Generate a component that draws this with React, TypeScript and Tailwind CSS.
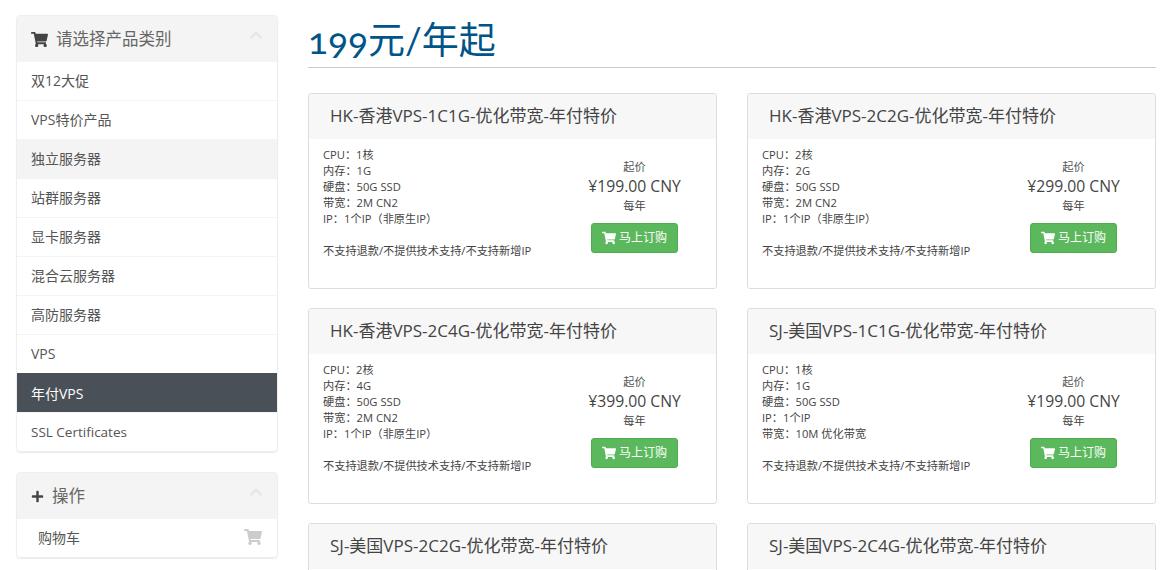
import React from 'react';
import { FaShoppingCart, FaPlus, FaChevronUp } from 'react-icons/fa';

const categories = ['双12大促', 'VPS特价产品', '独立服务器', '站群服务器', '显卡服务器', '混合云服务器', '高防服务器', 'VPS', '年付VPS', 'SSL Certificates'];

const products = [
  { name: 'HK-香港VPS-1C1G-优化带宽-年付特价', specs: ['CPU：1核', '内存：1G', '硬盘：50G SSD', '带宽：2M CN2', 'IP：1个IP（非原生IP）'], price: '¥199.00 CNY' },
  { name: 'HK-香港VPS-2C2G-优化带宽-年付特价', specs: ['CPU：2核', '内存：2G', '硬盘：50G SSD', '带宽：2M CN2', 'IP：1个IP（非原生IP）'], price: '¥299.00 CNY' },
  { name: 'HK-香港VPS-2C4G-优化带宽-年付特价', specs: ['CPU：2核', '内存：4G', '硬盘：50G SSD', '带宽：2M CN2', 'IP：1个IP（非原生IP）'], price: '¥399.00 CNY' },
  { name: 'SJ-美国VPS-1C1G-优化带宽-年付特价', specs: ['CPU：1核', '内存：1G', '硬盘：50G SSD', 'IP：1个IP', '带宽：10M 优化带宽'], price: '¥199.00 CNY' },
  { name: 'SJ-美国VPS-2C2G-优化带宽-年付特价', specs: ['CPU：1核', '内存：2G', '硬盘：50G SSD', 'IP：1个IP', '带宽：10M 优化带宽'], price: '¥299.00 CNY' },
  { name: 'SJ-美国VPS-2C4G-优化带宽-年付特价', specs: ['CPU：2核', '内存：4G', '硬盘：50G SSD', 'IP：1个IP', '带宽：10M 优化带宽'], price: '¥399.00 CNY' },
];

const PanelHeader = ({ icon, title }: { icon: React.ReactNode; title: string }) => (
  <div className="h-[46px] pt-[1px] bg-[#f4f4f4] flex items-center pl-[14px] pr-[14px] text-[#666]">
    <span className="text-[#444] text-[17px]">{icon}</span>
    <span className="ml-[8px] text-[16.5px]">{title}</span>
    <FaChevronUp className="ml-auto -mt-[9px] text-[#e6e6e6] text-[14px]" />
  </div>
);

const ProductCard = ({ name, specs, price }: { name: string; specs: string[]; price: string }) => (
  <div className="h-[196px] shrink-0 border border-[#dddddd] rounded-[3px] overflow-hidden bg-white">
    <div className="h-[45px] pb-[2px] bg-[#f7f7f7] flex items-center pl-[21px] text-[17px] text-[#444]">{name}</div>
    <div className="flex pl-[14px] pt-[8px] text-[#444]">
      <div className="w-[258px] text-[11.2px] leading-[16px]">
        {specs.map((s) => (
          <div key={s}>{s}</div>
        ))}
        <div className="mt-[16px]">不支持退款/不提供技术支持/不支持新增IP</div>
      </div>
      <div className="w-[103px] ml-[2px] flex flex-col items-center pt-[12px]">
        <div className="text-[11.2px] leading-[16px] text-[#555]">起价</div>
        <div className="text-[15.7px] leading-[22px] whitespace-nowrap">{price}</div>
        <div className="text-[11.2px] leading-[16px] mt-[1px]">每年</div>
        <button className="mt-[9px] w-[87px] h-[30px] shrink-0 bg-[#5cb85c] border border-[#4cae4c] rounded-[3px] text-white text-[12px] flex items-center justify-center gap-[3px]">
          <FaShoppingCart className="text-[14px]" />
          <span>马上订购</span>
        </button>
      </div>
    </div>
  </div>
);

export default function App() {
  return (
    <div className="h-[570px] overflow-hidden bg-white flex pl-[16px] pr-[19px] pt-[15px] text-[14px] font-['Open_Sans','Noto_Sans_CJK_SC',sans-serif]">
      <aside className="w-[262px] shrink-0 flex flex-col gap-[20px]">
        <div className="border border-[#eeeeee] rounded-[4px] shadow-[0_1px_1px_rgba(0,0,0,0.08)] overflow-hidden">
          <PanelHeader icon={<FaShoppingCart />} title="请选择产品类别" />
          {categories.map((c) => (
            <div
              key={c}
              className={`last:h-[38px] last:pb-0 flex items-center pl-[14px] border-b border-[#f3f3f3] last:border-b-0 ${
                c === 'SSL Certificates' ? 'text-[13.5px]' : 'text-[14px]'
              } ${c === '年付VPS' ? 'bg-[#495057] text-white -mt-px h-[40px] pt-[1px]' : c === '独立服务器' ? 'h-[39px] pb-[2px] bg-[#f4f4f4] text-[#555]' : 'h-[39px] pb-[2px] text-[#555]'}`}
            >
              {c}
            </div>
          ))}
        </div>
        <div className="border border-[#eeeeee] rounded-[4px] shadow-[0_1px_1px_rgba(0,0,0,0.08)] overflow-hidden">
          <PanelHeader icon={<FaPlus className="text-[13px]" />} title="操作" />
          <div className="h-[38px] pb-[2px] flex items-center pl-[21px] pr-[15px] text-[14px] text-[#555]">
            <span>购物车</span>
            <FaShoppingCart className="ml-auto text-[#cccccc] text-[18px]" />
          </div>
        </div>
      </aside>
      <main className="flex-1 ml-[30px]">
        <h1 className="text-[37px] leading-[50px] h-[53px] text-[#058] oldstyle-nums border-b border-[#cccccc] font-['Lato','Noto_Sans_CJK_SC',sans-serif]">199元/年起</h1>
        <div className="mt-[25px] grid grid-cols-2 gap-x-[30px] gap-y-[19px]">
          {products.map((p) => (
            <ProductCard key={p.name} {...p} />
          ))}
        </div>
      </main>
    </div>
  );
}
